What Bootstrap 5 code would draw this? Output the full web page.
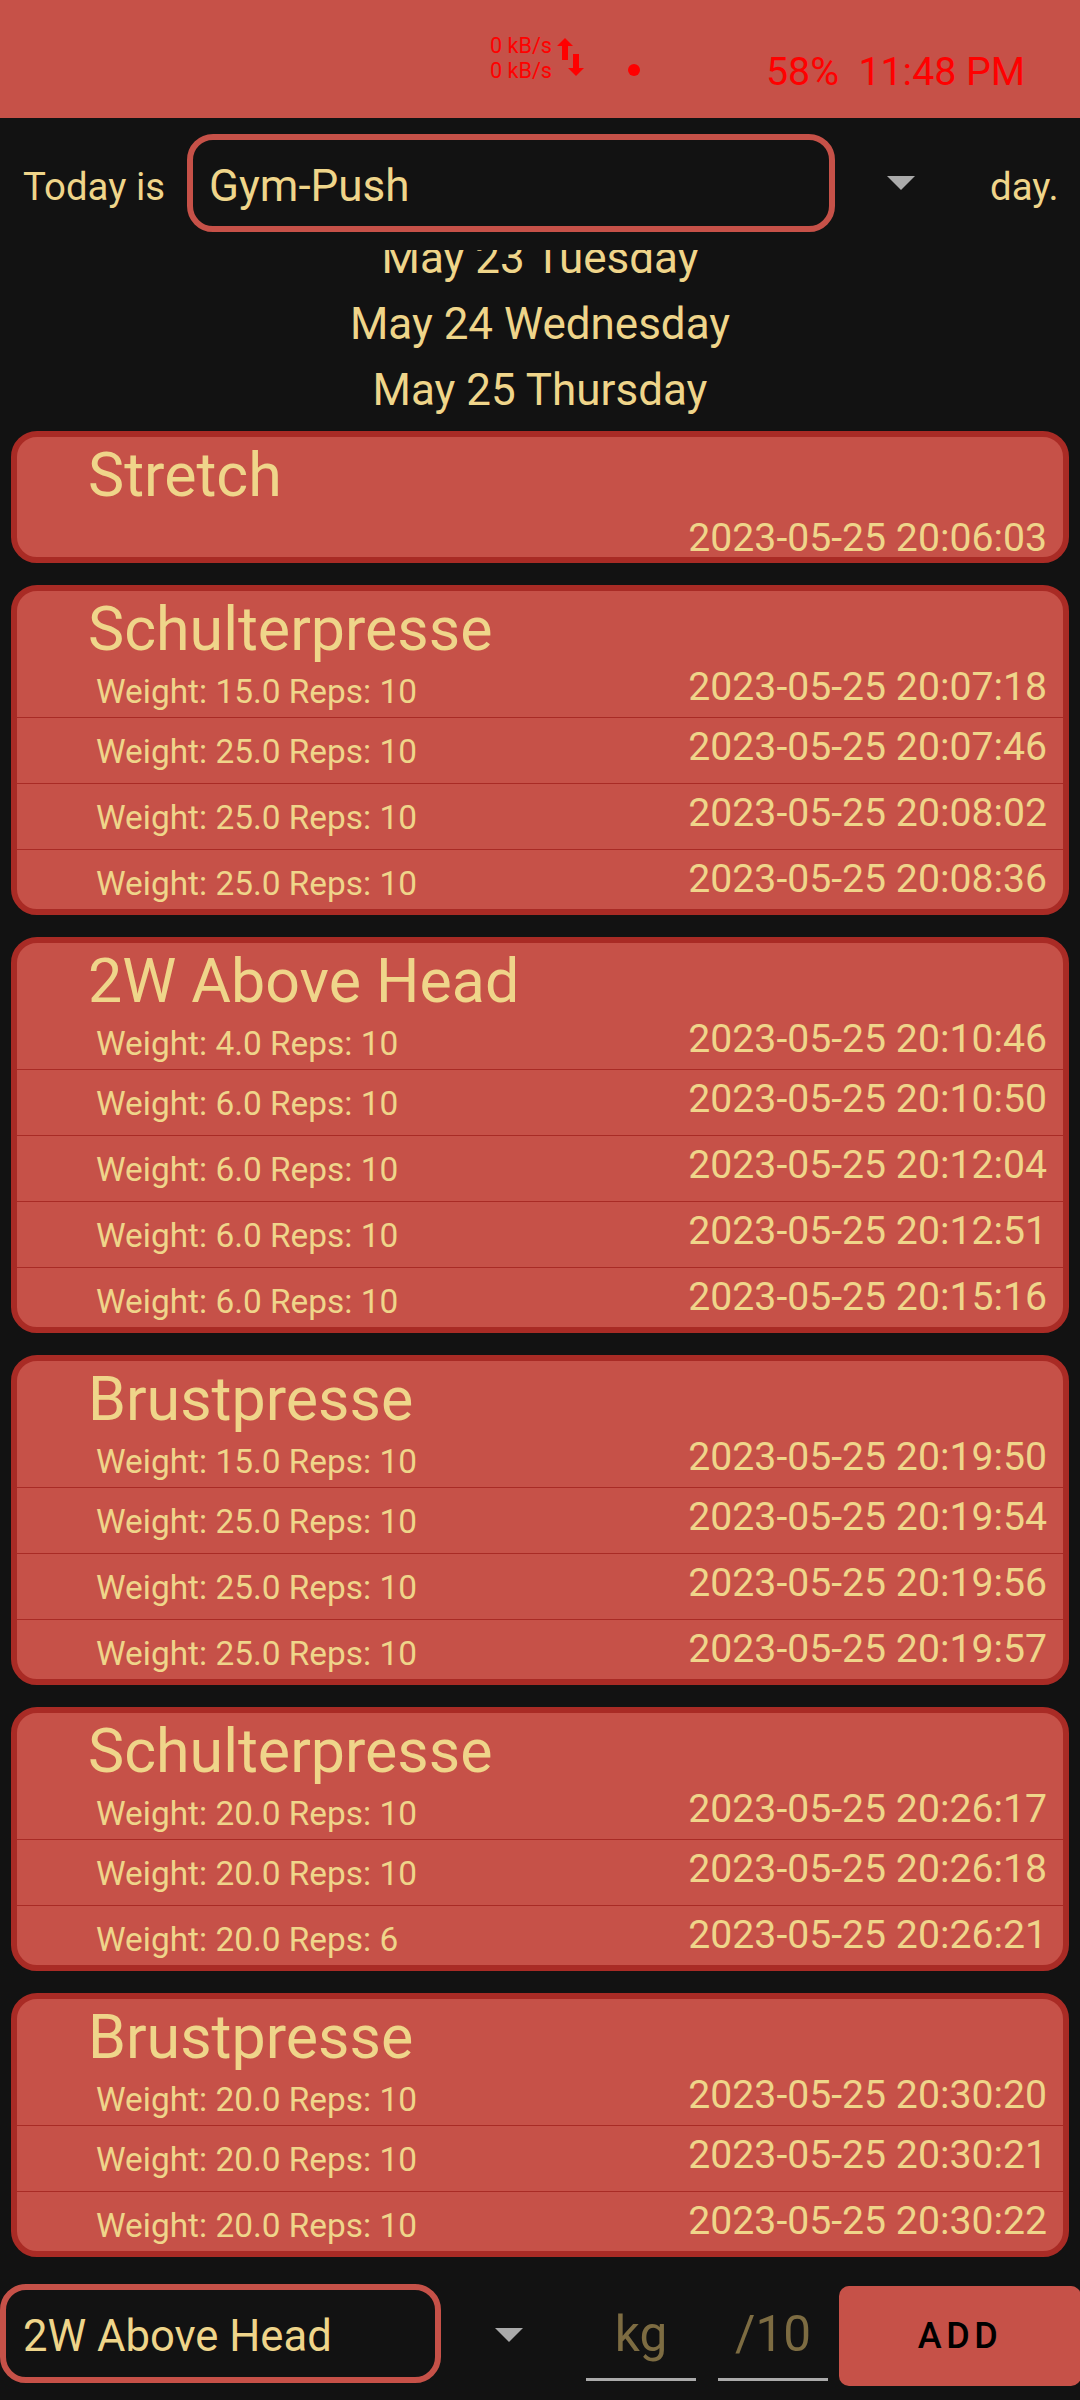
<!DOCTYPE html>
<html lang="en"><head><meta charset="utf-8"><title>Gym log</title>
<link href="https://cdn.jsdelivr.net/npm/bootstrap@5.3.0/dist/css/bootstrap.min.css" rel="stylesheet">
<style>
:root{--red:#c65148;--dark:#a92b25;--cream:#efd58a;--ink:#121212}
html,body{height:2400px;background:var(--ink)}
body{font-family:Roboto,"Liberation Sans",sans-serif;color:var(--cream);overflow:hidden}
.app-shell{width:1080px;height:2400px}
.status-strip{height:118px;background:var(--red);color:#f00;flex:none}
.net-speed{left:490px;top:33px;font-size:21.6px;line-height:25px}
.net-arrows{left:556px;top:37px}
.rec-dot{left:628px;top:64px;width:12px;height:12px;background:#f00}
.clock{left:766px;top:50px;font-size:39.3px;line-height:44px;white-space:pre}
.today-row{height:132px;flex:none;padding:16px 0 18px 23px}
.today-label{font-size:38.4px;width:164px;padding-top:7px}
.pick-box{border:6px solid var(--red);border-radius:26px;height:98px;padding-left:16px;padding-top:6px;font-size:44px;background:var(--ink)}
.pick-top{width:648px}
.tri{width:0;height:0;border-left:14px solid transparent;border-right:14px solid transparent;border-top:14px solid #aaa;flex:none}
.tri-top{margin-left:52px;margin-right:75px}
.day-word{font-size:38.4px;padding-top:7px}
.log-pane{flex:1 1 0;min-height:0;overflow:hidden}
.date-list{margin-top:-25px;margin-bottom:8px}
.date-line{height:66px;line-height:66px;font-size:44px;text-align:center}
.set-card{margin:0 11px 22px;background:var(--red);border:6px solid var(--dark);border-radius:26px;color:var(--cream);overflow:hidden}
.set-card>.list-group{border-top:0;border-bottom:0}
.set-title{height:67px;padding-left:71px;font-size:60.9px;line-height:78px}
.set-row{height:66px;padding:0 16px 0 79px;background:transparent;color:var(--cream);border:0;border-bottom:3px solid var(--dark);border-radius:0}
.set-row.first-row{height:60px}
.set-row.last-row{height:59px;border-bottom:0}
.set-row.lone-row{height:53px;border-bottom:0;padding-top:5px}
.w-text{font-size:33.4px;line-height:40px;padding-top:14px}
.t-text{font-size:39.2px;line-height:59px}
.form-row{height:116px;flex:none}
.pick-bottom{width:441px;padding-left:17px;flex:none;height:99px;font-size:43.6px}
.tri-bottom{margin-left:54px;margin-right:63px;margin-top:44px}
.num-box{width:110px;height:97px;border-bottom:3px solid #aaa;font-size:49.5px;color:#7d6c42;margin-right:22px;padding-top:20px;text-align:center;line-height:60px;flex:none}
.add-btn{width:242px;height:100px;margin-left:-11px;margin-top:2px;background:var(--red);border:0;border-radius:10px;color:#000;font-size:36px;font-weight:500;letter-spacing:4.5px;flex:none}
.add-btn:hover{background:var(--red);color:#000}
</style></head>
<body>
<div class="app-shell d-flex flex-column">
  <header class="status-strip position-relative">
    <div class="net-speed position-absolute"><div>0 kB/s</div><div>0 kB/s</div></div>
    <svg class="net-arrows position-absolute" width="30" height="42" viewBox="0 0 30 42"><path d="M9 1l8 8h-5v14H6V9H1z" fill="#f00"/><path d="M17 17h6v14h5l-8 8-8-8h5z" fill="#f00"/></svg>
    <div class="rec-dot position-absolute rounded-circle"></div>
    <div class="clock position-absolute">58%  11:48 PM</div>
  </header>
  <div class="today-row d-flex align-items-center">
    <div class="today-label">Today is</div>
    <div class="pick-box pick-top d-flex align-items-center">Gym-Push</div>
    <div class="tri tri-top"></div>
    <div class="day-word">day.</div>
  </div>
  <main class="log-pane">
    <div class="date-list">
      <div class="date-line">May 23 Tuesday</div>
      <div class="date-line">May 24 Wednesday</div>
      <div class="date-line">May 25 Thursday</div>
    </div>
    <section class="card set-card">
      <div class="set-title">Stretch</div>
      <ul class="list-group list-group-flush">
        <li class="list-group-item set-row lone-row d-flex justify-content-between"><span></span><span class="t-text">2023-05-25 20:06:03</span></li>
      </ul>
    </section>
    <section class="card set-card">
      <div class="set-title">Schulterpresse</div>
      <ul class="list-group list-group-flush">
        <li class="list-group-item set-row first-row d-flex justify-content-between"><span class="w-text">Weight: 15.0 Reps: 10</span><span class="t-text">2023-05-25 20:07:18</span></li>
        <li class="list-group-item set-row d-flex justify-content-between"><span class="w-text">Weight: 25.0 Reps: 10</span><span class="t-text">2023-05-25 20:07:46</span></li>
        <li class="list-group-item set-row d-flex justify-content-between"><span class="w-text">Weight: 25.0 Reps: 10</span><span class="t-text">2023-05-25 20:08:02</span></li>
        <li class="list-group-item set-row last-row d-flex justify-content-between"><span class="w-text">Weight: 25.0 Reps: 10</span><span class="t-text">2023-05-25 20:08:36</span></li>
      </ul>
    </section>
    <section class="card set-card">
      <div class="set-title">2W Above Head</div>
      <ul class="list-group list-group-flush">
        <li class="list-group-item set-row first-row d-flex justify-content-between"><span class="w-text">Weight: 4.0 Reps: 10</span><span class="t-text">2023-05-25 20:10:46</span></li>
        <li class="list-group-item set-row d-flex justify-content-between"><span class="w-text">Weight: 6.0 Reps: 10</span><span class="t-text">2023-05-25 20:10:50</span></li>
        <li class="list-group-item set-row d-flex justify-content-between"><span class="w-text">Weight: 6.0 Reps: 10</span><span class="t-text">2023-05-25 20:12:04</span></li>
        <li class="list-group-item set-row d-flex justify-content-between"><span class="w-text">Weight: 6.0 Reps: 10</span><span class="t-text">2023-05-25 20:12:51</span></li>
        <li class="list-group-item set-row last-row d-flex justify-content-between"><span class="w-text">Weight: 6.0 Reps: 10</span><span class="t-text">2023-05-25 20:15:16</span></li>
      </ul>
    </section>
    <section class="card set-card">
      <div class="set-title">Brustpresse</div>
      <ul class="list-group list-group-flush">
        <li class="list-group-item set-row first-row d-flex justify-content-between"><span class="w-text">Weight: 15.0 Reps: 10</span><span class="t-text">2023-05-25 20:19:50</span></li>
        <li class="list-group-item set-row d-flex justify-content-between"><span class="w-text">Weight: 25.0 Reps: 10</span><span class="t-text">2023-05-25 20:19:54</span></li>
        <li class="list-group-item set-row d-flex justify-content-between"><span class="w-text">Weight: 25.0 Reps: 10</span><span class="t-text">2023-05-25 20:19:56</span></li>
        <li class="list-group-item set-row last-row d-flex justify-content-between"><span class="w-text">Weight: 25.0 Reps: 10</span><span class="t-text">2023-05-25 20:19:57</span></li>
      </ul>
    </section>
    <section class="card set-card">
      <div class="set-title">Schulterpresse</div>
      <ul class="list-group list-group-flush">
        <li class="list-group-item set-row first-row d-flex justify-content-between"><span class="w-text">Weight: 20.0 Reps: 10</span><span class="t-text">2023-05-25 20:26:17</span></li>
        <li class="list-group-item set-row d-flex justify-content-between"><span class="w-text">Weight: 20.0 Reps: 10</span><span class="t-text">2023-05-25 20:26:18</span></li>
        <li class="list-group-item set-row last-row d-flex justify-content-between"><span class="w-text">Weight: 20.0 Reps: 6</span><span class="t-text">2023-05-25 20:26:21</span></li>
      </ul>
    </section>
    <section class="card set-card">
      <div class="set-title">Brustpresse</div>
      <ul class="list-group list-group-flush">
        <li class="list-group-item set-row first-row d-flex justify-content-between"><span class="w-text">Weight: 20.0 Reps: 10</span><span class="t-text">2023-05-25 20:30:20</span></li>
        <li class="list-group-item set-row d-flex justify-content-between"><span class="w-text">Weight: 20.0 Reps: 10</span><span class="t-text">2023-05-25 20:30:21</span></li>
        <li class="list-group-item set-row last-row d-flex justify-content-between"><span class="w-text">Weight: 20.0 Reps: 10</span><span class="t-text">2023-05-25 20:30:22</span></li>
      </ul>
    </section>
  </main>
  <div class="form-row d-flex align-items-start">
    <div class="pick-box pick-bottom d-flex align-items-center">2W Above Head</div>
    <div class="tri tri-bottom"></div>
    <div class="num-box">kg</div>
    <div class="num-box">/10</div>
    <button type="button" class="btn add-btn">ADD</button>
  </div>
</div>
</body></html>
